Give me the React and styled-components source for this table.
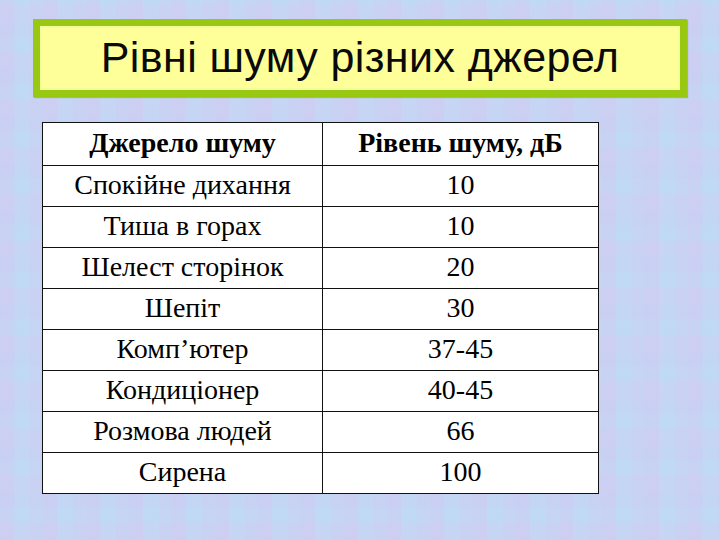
import React from "react";
import styled, { createGlobalStyle } from "styled-components";

const GlobalStyle = createGlobalStyle`
  html, body {
    margin: 0;
    padding: 0;
  }
  body {
    background: #c3d6f3;
  }
`;

const Slide = styled.div`
  width: 720px;
  height: 540px;
  box-sizing: border-box;
  padding-top: 19px;
  overflow: hidden;
  background-color: #c4d5f3;
  background-image:
    repeating-linear-gradient(90deg, rgba(212, 200, 242, 0.35) 0 14px, rgba(188, 222, 248, 0.25) 14px 30px, rgba(206, 206, 242, 0.25) 30px 43px),
    repeating-linear-gradient(0deg, rgba(214, 202, 240, 0.25) 0 17px, rgba(186, 222, 246, 0.22) 17px 33px, rgba(200, 206, 240, 0.2) 33px 47px);
  display: flex;
  flex-direction: column;
`;

const TitleBox = styled.div`
  margin-left: 33px;
  width: 654px;
  height: 78px;
  box-sizing: border-box;
  border: 7px solid #98c811;
  background: #ffff99;
  box-shadow: inset 0 0 0 2px #f6fb9c, 1px 1px 1px rgba(90, 110, 60, 0.35);
  display: flex;
  align-items: center;
  justify-content: center;
  padding-bottom: 2px;
`;

const Title = styled.h1`
  margin: 0;
  font-family: "Liberation Sans", Arial, sans-serif;
  font-weight: normal;
  font-size: 43px;
  color: #0a0a0a;
  letter-spacing: 0.4px;
`;

const Table = styled.table`
  margin: 25px 0 0 42px;
  width: 557px;
  border-collapse: collapse;
  background: #ffffff;
  table-layout: fixed;
`;

const Row = styled.tr`
  height: ${(p) => (p.$head ? 43 : 41)}px;
`;

const Cell = styled.td`
  border: 1.5px solid #111;
  text-align: center;
  vertical-align: middle;
  padding: 0 0 2px;
  line-height: 1;
  font-family: "Liberation Serif", "Times New Roman", serif;
  font-size: 28px;
  color: #000;
  font-weight: ${(p) => (p.$head ? "bold" : "normal")};
  width: ${(p) => (p.$first ? "279px" : "auto")};
`;

const rows = [
  ["Спокійне дихання", "10"],
  ["Тиша в горах", "10"],
  ["Шелест сторінок", "20"],
  ["Шепіт", "30"],
  ["Комп’ютер", "37-45"],
  ["Кондиціонер", "40-45"],
  ["Розмова людей", "66"],
  ["Сирена", "100"],
];

export default function App() {
  return (
    <>
      <GlobalStyle />
      <Slide>
        <TitleBox>
          <Title>Рівні шуму різних джерел</Title>
        </TitleBox>
        <Table>
          <tbody>
            <Row $head>
              <Cell $head $first>Джерело шуму</Cell>
              <Cell $head>Рівень шуму, дБ</Cell>
            </Row>
            {rows.map(([src, level]) => (
              <Row key={src}>
                <Cell $first>{src}</Cell>
                <Cell>{level}</Cell>
              </Row>
            ))}
          </tbody>
        </Table>
      </Slide>
    </>
  );
}
